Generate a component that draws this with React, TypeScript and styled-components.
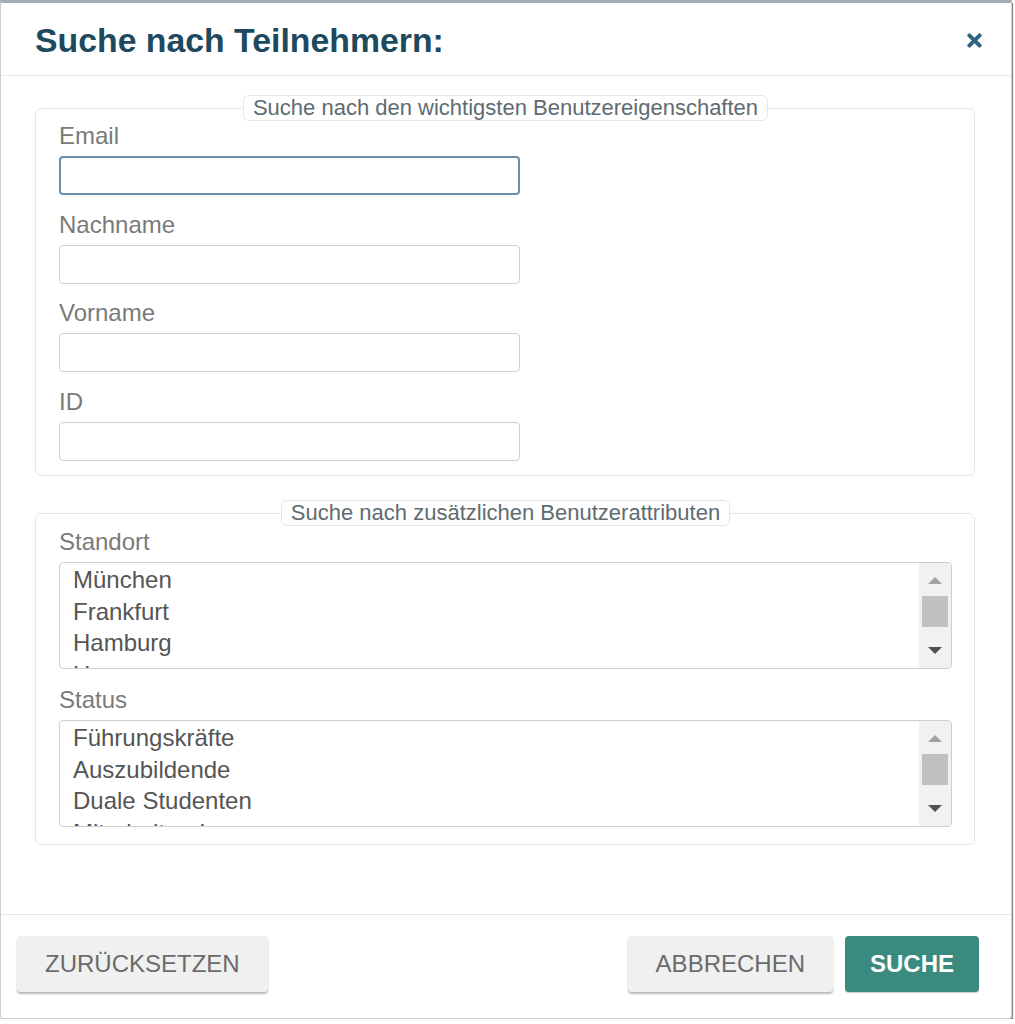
import styled, { createGlobalStyle } from "styled-components";
import { FaTimes } from "react-icons/fa";

const standorte = ["München", "Frankfurt", "Hamburg", "Hannover"];
const statusListe = ["Führungskräfte", "Auszubildende", "Duale Studenten", "Mitarbeitende"];

type SelectListProps = {
  items: string[];
};

function SelectList({ items }: SelectListProps) {
  return (
    <ListBox>
      <Options>
        {items.map((item) => (
          <Option key={item}>{item}</Option>
        ))}
      </Options>
      <ScrollBar>
        <Arrow $dir="up" />
        <Thumb />
        <Arrow $dir="down" />
      </ScrollBar>
    </ListBox>
  );
}

function App() {
  return (
    <>
      <GlobalStyle />
      <Dialog>
        <Header>
          <Title>Suche nach Teilnehmern:</Title>
          <CloseButton aria-label="Schließen">
            <FaTimes />
          </CloseButton>
        </Header>

        <Body>
          <Group>
            <Legend>Suche nach den wichtigsten Benutzereigenschaften</Legend>
            <Fields $gap={14.7}>
              <Field>
                <Label>Email</Label>
                <Input $focused />
              </Field>
              <Field>
                <Label>Nachname</Label>
                <Input />
              </Field>
              <Field>
                <Label>Vorname</Label>
                <Input />
              </Field>
              <Field>
                <Label>ID</Label>
                <Input />
              </Field>
            </Fields>
          </Group>

          <Group $spaced>
            <Legend>Suche nach zusätzlichen Benutzerattributen</Legend>
            <Fields $gap={16}>
              <Field>
                <Label>Standort</Label>
                <SelectList items={standorte} />
              </Field>
              <Field>
                <Label>Status</Label>
                <SelectList items={statusListe} />
              </Field>
            </Fields>
          </Group>
        </Body>

        <Footer>
          <Button>Zurücksetzen</Button>
          <RightButtons>
            <Button>Abbrechen</Button>
            <Button $primary>Suche</Button>
          </RightButtons>
        </Footer>
      </Dialog>
    </>
  );
}

export default App;

const GlobalStyle = createGlobalStyle`
  html, body {
    margin: 0;
    background: #ffffff;
    font-family: "Liberation Sans", Arial, sans-serif;
  }
  * {
    box-sizing: border-box;
  }
`;

const Dialog = styled.div`
  width: 1012px;
  height: 1019px;
  display: flex;
  flex-direction: column;
  background: #ffffff;
  border: 1px solid #c9ced2;
  border-top: 3px solid #a4aeb6;
  border-radius: 0 0 3px 3px;
  box-shadow: 1px 3px 1px rgba(70, 80, 90, 0.75);
`;

const Header = styled.div`
  height: 73px;
  flex-shrink: 0;
  display: flex;
  align-items: center;
  justify-content: space-between;
  padding: 3px 26px 0 34px;
  border-bottom: 1px solid #e9e9e9;
`;

const Title = styled.h1`
  margin: 0;
  font-size: 33.8px;
  font-weight: bold;
  color: #1d4a5e;
`;

const CloseButton = styled.button`
  border: none;
  background: none;
  padding: 0;
  display: flex;
  color: #2f6183;
  font-size: 21px;
  cursor: pointer;
`;

const Body = styled.div`
  flex: 1;
  padding: 19px 36px 0 34px;
`;

const Group = styled.fieldset<{ $spaced?: boolean }>`
  margin: ${(p) => (p.$spaced ? "24px" : "0")} 0 0;
  min-width: 0;
  padding: ${(p) => (p.$spaced ? "1px" : "0")} 22px ${(p) => (p.$spaced ? "17px" : "14px")} 23px;
  border: 1px solid #e6e6e6;
  border-radius: 6px;
`;

const Legend = styled.legend`
  margin: 0 auto;
  padding: 0 9px;
  height: 26px;
  line-height: 24px;
  font-size: 22px;
  color: #5e6b70;
  border: 1px solid #e6e6e6;
  border-radius: 6px;
  background: #ffffff;
`;

const Fields = styled.div<{ $gap: number }>`
  display: flex;
  flex-direction: column;
  gap: ${(p) => p.$gap}px;
`;

const Field = styled.div`
  display: flex;
  flex-direction: column;
  gap: 5px;
`;

const Label = styled.label`
  display: block;
  height: 30px;
  font-size: 24px;
  line-height: 30px;
  color: #7a7a7a;
`;

const Input = styled.input<{ $focused?: boolean }>`
  display: block;
  width: 461px;
  height: 39px;
  margin: 0;
  border-radius: 4px;
  font-size: 22px;
  padding: 0 10px;
  outline: none;
  background: #ffffff;
  border: ${(p) => (p.$focused ? "2px solid #6d8daa" : "1px solid #cfcfcf")};
`;

const ListBox = styled.div`
  display: flex;
  height: 107px;
  border: 1px solid #cfcfcf;
  border-radius: 4px;
  overflow: hidden;
  background: #ffffff;
`;

const Options = styled.ul`
  flex: 1;
  margin: 0;
  padding: 1px 0 0 13px;
  list-style: none;
  overflow: hidden;
`;

const Option = styled.li`
  font-size: 24px;
  line-height: 31.5px;
  color: #555555;
  white-space: nowrap;
`;

const ScrollBar = styled.div`
  width: 32px;
  display: flex;
  flex-direction: column;
  align-items: center;
  padding: 14px 0;
  background: #f1f1f1;
`;

const Arrow = styled.span<{ $dir: "up" | "down" }>`
  width: 0;
  height: 0;
  border-left: 7.5px solid transparent;
  border-right: 7.5px solid transparent;
  ${(p) =>
    p.$dir === "up"
      ? "border-bottom: 7px solid #a3a3a3;"
      : "border-top: 7px solid #505050; margin-top: auto;"}
`;

const Thumb = styled.div`
  width: 26px;
  height: 31px;
  margin-top: 12px;
  background: #c1c1c1;
`;

const Footer = styled.div`
  height: 104px;
  flex-shrink: 0;
  display: flex;
  align-items: flex-start;
  padding: 21px 32px 0 16px;
  border-top: 1px solid #e8e8e8;
`;

const RightButtons = styled.div`
  margin-left: auto;
  display: flex;
  gap: 12px;
`;

const Button = styled.button<{ $primary?: boolean }>`
  height: 56px;
  padding: 0 ${(p) => (p.$primary ? "25px" : "28px")};
  border: none;
  border-radius: 4px;
  font-family: inherit;
  font-size: 24px;
  text-transform: uppercase;
  cursor: pointer;
  font-weight: ${(p) => (p.$primary ? "bold" : "normal")};
  color: ${(p) => (p.$primary ? "#ffffff" : "#6b6b6b")};
  background: ${(p) => (p.$primary ? "#3a8a7f" : "#f0f0f0")};
  box-shadow: ${(p) => (p.$primary ? "0 1px 1px rgba(0, 0, 0, 0.2)" : "0 2px 2px rgba(0, 0, 0, 0.28)")};
`;
